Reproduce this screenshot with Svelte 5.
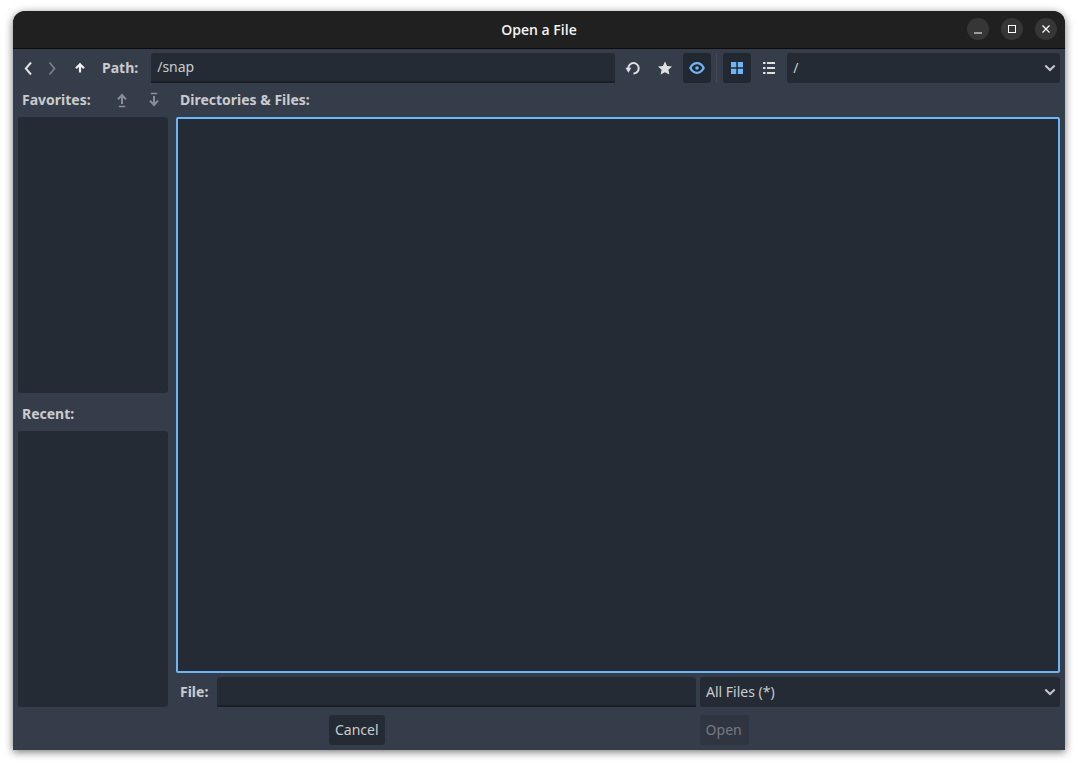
<script>
    let path = $state('/snap')
    let fileName = $state('')
</script>

<div class="page">
    <div class="window">
        <header class="titlebar">
            <span class="title">Open a File</span>
            <div class="winbtns">
                <button class="winbtn" aria-label="Minimize">
                    <svg width="16" height="16" viewBox="0 0 16 16"><path d="M4 12h8" stroke="#fff" stroke-width="1" fill="none"/></svg>
                </button>
                <button class="winbtn" aria-label="Maximize">
                    <svg width="16" height="16" viewBox="0 0 16 16"><rect x="4.5" y="4.5" width="7" height="7" stroke="#fff" stroke-width="1" fill="none"/></svg>
                </button>
                <button class="winbtn" aria-label="Close">
                    <svg width="16" height="16" viewBox="0 0 16 16"><path d="M4.5 4.5l7 7M11.5 4.5l-7 7" stroke="#fff" stroke-width="1.2" fill="none"/></svg>
                </button>
            </div>
        </header>

        <div class="body">
            <div class="toolbar">
                <button class="tool nav" aria-label="Back">
                    <svg width="16" height="16" viewBox="0 0 16 16"><path d="M11 2.500L5.800 8.500 11 14.500" stroke="#e0e0e0" stroke-width="2" fill="none"/></svg>
                </button>
                <button class="tool nav dim" aria-label="Forward">
                    <svg width="16" height="16" viewBox="0 0 16 16"><path d="M5.500 2.500L10.500 8.500 5.500 14.500" stroke="#e0e0e0" stroke-width="1.800" fill="none"/></svg>
                </button>
                <button class="tool nav up" aria-label="Up">
                    <svg width="16" height="16" viewBox="0 0 16 16"><path d="M8 12.500V5M4 8.300L8 4.300 12 8.300" stroke="#f0f0f0" stroke-width="2.200" fill="none"/></svg>
                </button>
                <span class="label pathlabel">Path:</span>
                <input class="field path" bind:value={path} />
                <button class="tool" aria-label="Refresh">
                    <svg width="16" height="16" viewBox="0 0 16 16"><path d="M8.500 13.500A5.200 5.200 0 1 0 3.300 8.300" stroke="#e0e0e0" stroke-width="2" fill="none"/><path d="M0.500 7.800h5.800l-2.900 5z" fill="#e0e0e0"/></svg>
                </button>
                <button class="tool" aria-label="Favorite">
                    <svg width="16" height="16" viewBox="0 0 16 16"><path d="M8 1.500l2.100 4.400 4.900.6-3.600 3.300 1 4.800L8 12.200l-4.400 2.400 1-4.800L1 6.500l4.900-.6z" fill="#e0e0e0"/></svg>
                </button>
                <button class="tool on" aria-label="Toggle hidden">
                    <svg width="16" height="16" viewBox="0 0 16 16"><path d="M1.300 8C3.100 4.600 5.400 3.200 8 3.200s4.900 1.400 6.700 4.800c-1.800 3.400-4.100 4.800-6.700 4.800S3.100 11.400 1.300 8z" stroke="#6cb6f7" stroke-width="2.200" fill="none"/><circle cx="8" cy="8" r="1.800" fill="#6cb6f7"/></svg>
                </button>
                <span class="sep"></span>
                <button class="tool on" aria-label="Thumbnails">
                    <svg width="16" height="16" viewBox="0 0 16 16"><path d="M2 2h5.300v5.300H2zM8.800 2H14v5.300H8.800zM2 8.800h5.300V14H2zM8.800 8.800H14V14H8.800z" fill="#6cb6f7"/></svg>
                </button>
                <button class="tool list" aria-label="List">
                    <svg width="16" height="16" viewBox="0 0 16 16"><path d="M2 2h2.500v2H2zM2 7h2.500v2H2zM2 12h2.500v2H2zM6 2h8v2H6zM6 7h8v2H6zM6 12h8v2H6z" fill="#e0e0e0"/></svg>
                </button>
                <div class="field select drives">
                    <span>/</span>
                    <svg class="chev" width="16" height="16" viewBox="0 0 16 16"><path d="M3.300 5.500L8 10 12.700 5.500" stroke="#c6c8cc" stroke-width="2" fill="none"/></svg>
                </div>
            </div>

            <div class="main">
                <aside class="side">
                    <div class="sidehead">
                        <span class="label">Favorites:</span>
                        <div class="moves">
                            <svg width="16" height="16" viewBox="0 0 16 16"><path d="M8 12V4" stroke="#8a8e96" stroke-width="2" fill="none"/><path d="M8 1.500L12.800 6.800 11.300 8 8 4.500 4.700 8 3.200 6.800z" fill="#8a8e96"/><path d="M4.800 14.500h6.400" stroke="#8a8e96" stroke-width="1.500" fill="none"/></svg>
                            <svg width="16" height="16" viewBox="0 0 16 16"><path d="M8 4v8" stroke="#8a8e96" stroke-width="2" fill="none"/><path d="M8 14.500L12.800 9.200 11.300 8 8 11.500 4.700 8 3.200 9.200z" fill="#8a8e96"/><path d="M4.800 1.500h6.400" stroke="#8a8e96" stroke-width="1.500" fill="none"/></svg>
                        </div>
                    </div>
                    <div class="panel"></div>
                    <div class="sidehead recent"><span class="label">Recent:</span></div>
                    <div class="panel"></div>
                </aside>

                <section class="files">
                    <div class="fileshead"><span class="label">Directories &amp; Files:</span></div>
                    <div class="tree"></div>
                    <div class="filerow">
                        <span class="label">File:</span>
                        <input class="field name" bind:value={fileName} />
                        <div class="field select filter">
                            <span>All Files (*)</span>
                            <svg class="chev" width="16" height="16" viewBox="0 0 16 16"><path d="M3.300 5.500L8 10 12.700 5.500" stroke="#c6c8cc" stroke-width="2" fill="none"/></svg>
                        </div>
                    </div>
                </section>
            </div>

            <div class="actions">
                <button class="act cancel">Cancel</button>
                <button class="act open" disabled>Open</button>
            </div>
        </div>
    </div>
</div>

<style>
    :global(body) {
        margin: 0;
        background: #fff;
    }

    .page {
        width: 1078px;
        height: 766px;
        padding: 11px 13px 16px;
        box-sizing: border-box;
        font-family: "Noto Sans", sans-serif;
        font-size: 14px;
    }

    .window {
        height: 739px;
        display: flex;
        flex-direction: column;
        background: #363d4a;
        border-radius: 12px 12px 0 0;
        box-shadow: 0 2px 8px rgba(0, 0, 0, 0.55);
        overflow: hidden;
    }

    .titlebar {
        position: relative;
        height: 37px;
        flex: none;
        display: flex;
        align-items: center;
        justify-content: center;
        background: #202020;
        border-bottom: 1px solid #0c0c0c;
    }

    .title {
        color: #f4f4f4;
        font-family: "Open Sans", "Noto Sans", sans-serif;
        font-weight: 600;
        font-size: 14px;
    }

    .winbtns {
        position: absolute;
        right: 8px;
        top: 7px;
        display: flex;
        gap: 12px;
    }

    .winbtn {
        width: 22px;
        height: 22px;
        padding: 0;
        border: 0;
        border-radius: 50%;
        background: #363636;
        display: flex;
        align-items: center;
        justify-content: center;
    }

    .body {
        flex: 1;
        display: flex;
        flex-direction: column;
        padding: 4px 5px 5px;
        min-height: 0;
    }

    .toolbar {
        height: 30px;
        display: flex;
        align-items: center;
        flex: none;
    }

    .tool {
        width: 28px;
        height: 30px;
        margin-left: 4px;
        padding: 0;
        border: 0;
        border-radius: 3px;
        background: none;
        display: flex;
        align-items: center;
        justify-content: center;
        flex: none;
    }

    .tool.nav {
        width: 20px;
        margin-left: 0;
    }

    .tool.nav.dim {
        margin-left: 4px;
    }

    .tool.nav.dim svg {
        opacity: 0.4;
    }

    .tool.nav.up {
        margin-left: 8px;
    }

    .tool.on {
        background: #212832;
    }

    .label {
        color: #c9cbcf;
        font-weight: 700;
        white-space: nowrap;
    }

    .pathlabel {
        margin: 0 13px 2px 12px;
    }

    .field {
        box-sizing: border-box;
        height: 30px;
        background: #252b34;
        border: 0;
        border-radius: 3px;
        color: #c9cbcf;
        font: inherit;
        padding: 0 6px;
        outline: none;
    }

    input.field {
        border-radius: 3px 3px 0 0;
        border-bottom: 2px solid #1b2027;
        padding-bottom: 2px;
    }

    .path {
        width: 464px;
        flex: none;
    }

    .select {
        display: flex;
        align-items: center;
        justify-content: space-between;
        padding-right: 2px;
    }

    .select span {
        margin-bottom: 2px;
    }

    .chev {
        flex: none;
    }

    .drives {
        flex: 1;
        margin-left: 4px;
    }

    .sep {
        width: 1px;
        height: 30px;
        margin: 0 2px 0 5px;
        background: #454c59;
        flex: none;
    }

    .main {
        flex: 1;
        min-height: 0;
        display: flex;
        gap: 8px;
    }

    .side {
        width: 150px;
        flex: none;
        display: flex;
        flex-direction: column;
    }

    .sidehead {
        height: 34px;
        display: flex;
        align-items: center;
        justify-content: space-between;
        padding-left: 4px;
        flex: none;
    }

    .sidehead .label,
    .fileshead .label,
    .filerow .label {
        margin-bottom: 2px;
    }

    .sidehead.recent {
        height: 38px;
    }

    .sidehead.recent .label {
        margin: 2px 0 0;
    }

    .moves {
        display: flex;
        gap: 16px;
        margin-right: 6px;
    }

    .panel {
        flex: 1;
        background: #252b34;
        border-radius: 3px;
    }

    .files {
        flex: 1;
        min-width: 0;
        display: flex;
        flex-direction: column;
    }

    .fileshead {
        height: 34px;
        display: flex;
        align-items: center;
        padding-left: 4px;
        flex: none;
    }

    .tree {
        flex: 1;
        background: #252b34;
        border: 2px solid #6cb6f7;
        border-radius: 2px;
    }

    .filerow {
        height: 30px;
        margin-top: 4px;
        display: flex;
        align-items: center;
        padding-left: 4px;
        flex: none;
    }

    .name {
        flex: 1;
        min-width: 0;
        margin: 0 4px 0 9px;
    }

    .filter {
        width: 360px;
        flex: none;
    }

    .actions {
        height: 30px;
        margin-top: 8px;
        display: flex;
        flex: none;
    }

    .act {
        height: 30px;
        padding: 0 6px 2px;
        border: 0;
        border-radius: 3px;
        font: inherit;
    }

    .cancel {
        margin-left: 311px;
        background: #252b34;
        color: #c9cbcf;
    }

    .open {
        margin-left: 315px;
        padding-right: 7px;
        background: #303641;
        color: #767a82;
    }
</style>
